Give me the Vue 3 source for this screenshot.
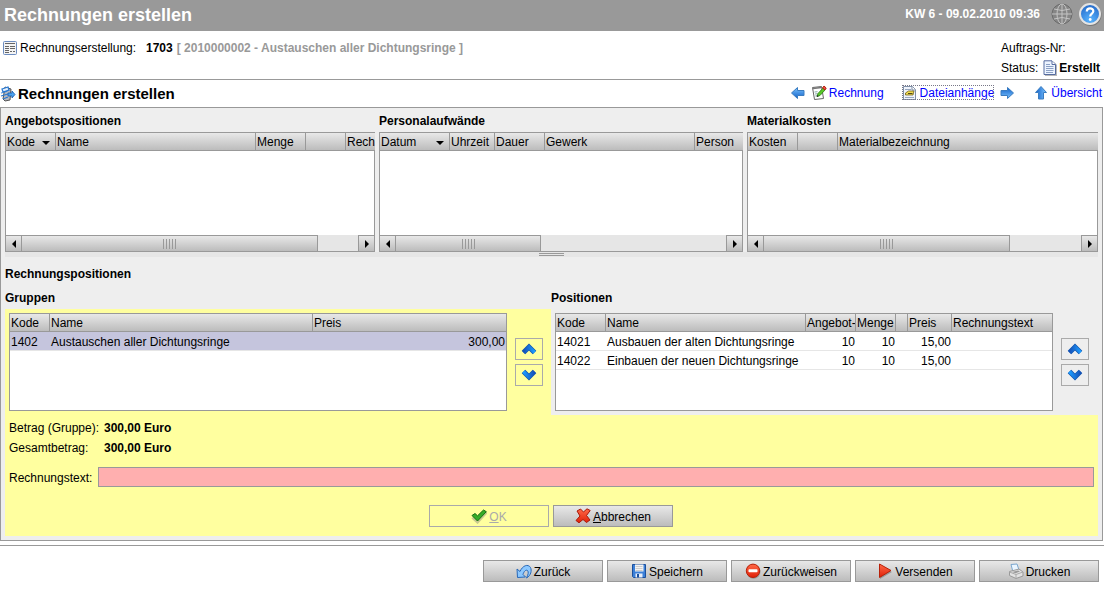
<script setup>
import { ref } from 'vue'

const sources = [
  {
    title: 'Angebotspositionen',
    thumb: 88,
    columns: [
      { label: 'Kode', width: 50, sorted: true },
      { label: 'Name', width: 200 },
      { label: 'Menge', width: 50 },
      { label: '', width: 40 },
      { label: 'Rech' }
    ]
  },
  {
    title: 'Personalaufwände',
    thumb: 44,
    columns: [
      { label: 'Datum', width: 70, sorted: true },
      { label: 'Uhrzeit', width: 45 },
      { label: 'Dauer', width: 50 },
      { label: 'Gewerk', width: 150 },
      { label: 'Person' }
    ]
  },
  {
    title: 'Materialkosten',
    thumb: 77.5,
    columns: [
      { label: 'Kosten', width: 50 },
      { label: '', width: 40 },
      { label: 'Materialbezeichnung' }
    ]
  }
]

const positions = [
  { code: '14021', name: 'Ausbauen der alten Dichtungsringe', offer: 10, amount: 10, price: '15,00' },
  { code: '14022', name: 'Einbauen der neuen Dichtungsringe', offer: 10, amount: 10, price: '15,00' }
]

const actions = [
  { label: 'Zurück', icon: 'i-undo' },
  { label: 'Speichern', icon: 'i-save' },
  { label: 'Zurückweisen', icon: 'i-reject' },
  { label: 'Versenden', icon: 'i-play' },
  { label: 'Drucken', icon: 'i-print' }
]

const invoiceText = ref('')
</script>

<template>
  <div class="page">
    <svg class="sprite" aria-hidden="true">
      <defs>
        <linearGradient id="g-blue" x1="0" y1="0" x2="0" y2="1">
          <stop offset="0" stop-color="#7cc4ff" /><stop offset="1" stop-color="#1060c8" />
        </linearGradient>
        <linearGradient id="g-chev" x1="0" y1="0" x2="1" y2="0">
          <stop offset="0" stop-color="#1450b8" /><stop offset="1" stop-color="#1c9cff" />
        </linearGradient>
        <linearGradient id="g-red" x1="0" y1="0" x2="0" y2="1">
          <stop offset="0" stop-color="#ff6a48" /><stop offset="1" stop-color="#e02008" />
        </linearGradient>
        <radialGradient id="g-help" cx=".5" cy=".8" r=".8">
          <stop offset="0" stop-color="#58b4ff" /><stop offset="1" stop-color="#2468c8" />
        </radialGradient>
      </defs>
      <symbol id="i-globe" viewBox="0 0 24 24">
        <circle cx="12" cy="12" r="10" fill="#858585" stroke="#6c6c6c" />
        <g fill="none" stroke="#c4c4c4">
          <ellipse cx="12" cy="12" rx="5" ry="10" />
          <path d="M12 2v20M2 12h20M4 7q8 3 16 0M4 17q8-3 16 0" />
        </g>
      </symbol>
      <symbol id="i-help" viewBox="0 0 24 24">
        <circle cx="12.500" cy="13" r="11" fill="#777" />
        <circle cx="12" cy="12" r="10" fill="url(#g-help)" stroke="#e4e4e4" stroke-width="2" />
        <path d="M8.800 9.500C8.800 5.200 15.500 5.400 15.300 9.300c0 2.300-3.100 2.500-3.100 5.200" fill="none" stroke="#fff" stroke-width="2.200" />
        <circle cx="12.200" cy="17.500" r="1.400" fill="#fff" />
      </symbol>
      <symbol id="i-form" viewBox="0 0 16 16">
        <rect x="1.500" y="1.500" width="13" height="13" rx="1" fill="#f4f4f4" stroke="#6c8cc0" />
        <path d="M3 3.500h10M3 6.500h4M3 8.500h4M3 10.500h4M3 12.500h4M8 6.500h5M8 8.500h5M8 11.500h2M11 11.500h2" stroke="#666" />
      </symbol>
      <symbol id="i-invoice" viewBox="0 0 16 16">
        <path d="M5 1l6 2-1 11-5 1-2-2z" fill="#b4b8c0" stroke="#555" />
        <path d="M2 3l6-2 1 3-6 2zM1 7l7-2M1 10l7-2M3 13l5-2" fill="#e4f0ff" stroke="#2878d0" stroke-width="1.300" />
        <path d="M8 7h4V5l3 3.500L12 12v-2H8z" fill="#4ca4f0" stroke="#1858a8" stroke-width=".8" />
      </symbol>
      <symbol id="i-doc" viewBox="0 0 16 16">
        <path d="M3 2h9l3 3v11H3z" fill="#888" opacity=".6" />
        <path d="M2 .8h8l3.500 3.500v10.200H2z" fill="#edf4ff" stroke="#566ca0" />
        <path d="M10 1v3.500h3.500" fill="#fff" stroke="#566ca0" />
        <path d="M4 4.500h4M4 6.500h7.500M4 8.500h7.500M4 10.500h7.500M4 12.500h7" stroke="#8ba0c4" />
      </symbol>
      <symbol id="i-edit" viewBox="0 0 16 16">
        <path d="M1.500 2.500l9-1 2 12-9 1z" fill="#fff" stroke="#666" />
        <path d="M2 3.500l8.500-1" stroke="#777" stroke-width="1.500" />
        <path d="M3.500 7l3-.3M4 9l2.500-.3M4.300 11l2-.3" stroke="#8aa" />
        <path d="M6 11.500L7 8.500 12 3l2 2-5 5.500z" fill="#58c828" stroke="#287810" stroke-width=".8" />
        <path d="M11.500 3l1.500-2 2.200 2L14 5z" fill="#f05040" stroke="#b02010" />
        <path d="M5.800 12l.6-2 1.300 1.300z" fill="#222" />
      </symbol>
      <symbol id="i-attach" viewBox="0 0 16 16">
        <path d="M1.500 1.500h9l3 3v10h-12z" fill="#f0f4fc" stroke="#8090a8" />
        <path d="M10 1.500v3.500h3.500" fill="#fff" stroke="#8090a8" />
        <path d="M3 4.500h6M3 12.500h9" stroke="#98a8c0" />
        <path d="M3.500 8l3-2h5.500l-1 4H3.500z" fill="#f0dc50" stroke="#706020" stroke-width=".8" />
        <path d="M6 8.500h4.500" stroke="#504818" />
      </symbol>
      <symbol id="i-arrow" viewBox="0 0 16 16">
        <path d="M1.500 8l6-5.500v3h6.500v5H7.500v3z" fill="url(#g-blue)" stroke="#3a7cc0" stroke-linejoin="round" />
      </symbol>
      <symbol id="i-chevron" viewBox="0 0 16 16">
        <path d="M2.500 11.500L8 6l5.500 5.500" fill="none" stroke="#1458b0" stroke-width="5" />
        <path d="M2.500 11.500L8 6l5.500 5.500" fill="none" stroke="url(#g-chev)" stroke-width="3.500" />
      </symbol>
      <symbol id="i-check" viewBox="0 0 16 16">
        <path d="M1.500 9.500L6.500 14 15.500 4" fill="none" stroke="#777" stroke-width="3" opacity=".4" />
        <path d="M1 7.500l3-2 2.500 2.300L12.500 2l2.800 1.700L6.500 13z" fill="#34ac28" stroke="#187010" stroke-linejoin="round" />
      </symbol>
      <symbol id="i-cross" viewBox="0 0 16 16">
        <path d="M2 3l3.500-2L8.500 4 12 .8l3.200 1.700L11.500 7.500l3.500 4.500-3.500 2.500L8 11.500l-4 3.300-3-2.300L5 8z" fill="url(#g-red)" stroke="#a81808" stroke-linejoin="round" />
      </symbol>
      <symbol id="i-undo" viewBox="0 0 16 16">
        <path d="M1 6l.5 8.500L9.500 14 7 11.500C8 8 10 6.500 11.500 7.500 13 9 12 12 10.500 15 15 12.500 16 7.500 14.500 4.500 12 .5 6.500 2.500 4 8.500z" fill="#8cc8ff" stroke="#2868b8" stroke-linejoin="round" />
      </symbol>
      <symbol id="i-save" viewBox="0 0 16 16">
        <path d="M1.500 1.500h13v13h-12l-1-1z" fill="#3c80d8" stroke="#1c509c" />
        <path d="M4 1.500h8.500v7H4z" fill="#f2f2f2" />
        <path d="M4.500 3.500h7M4.500 5.500h7M4.500 7.500h7" stroke="#ccc" />
        <path d="M4.500 10.500h7v4h-7z" fill="#e8eef8" />
        <path d="M6 11h2v3.500H6z" fill="#1c509c" />
      </symbol>
      <symbol id="i-reject" viewBox="0 0 16 16">
        <circle cx="8.500" cy="8.800" r="7" fill="#777" opacity=".6" />
        <circle cx="8" cy="7.800" r="6.700" fill="url(#g-red)" stroke="#b82008" />
        <rect x="3.500" y="6.300" width="9" height="3" rx=".8" fill="#fff" />
      </symbol>
      <symbol id="i-play" viewBox="0 0 16 16">
        <path d="M3 3l12 6L3 16z" fill="#777" opacity=".6" />
        <path d="M2.500 1l11.500 6.500L2.500 14.500z" fill="url(#g-red)" stroke="#b82008" stroke-linejoin="round" />
      </symbol>
      <symbol id="i-print" viewBox="0 0 16 16">
        <path d="M3 1.500l6-.5 2 6-6 2z" fill="#eaf5ff" stroke="#7ca8d0" />
        <path d="M1.500 8.500L11 6l4 3v4l-7 2.500-6.500-3z" fill="#e2e2e2" stroke="#999" stroke-linejoin="round" />
        <path d="M1.500 9L8 11.500 15 9M8 11.500v3.500" fill="none" stroke="#aaa" />
        <path d="M4 9l6-1.500 2 1-4.500 1.800z" fill="#999" />
      </symbol>
    </svg>

    <header class="topbar">
      <h1>Rechnungen erstellen</h1>
      <span class="clock">KW 6 - 09.02.2010 09:36</span>
      <svg class="icon-lg"><use href="#i-globe" /></svg>
      <button class="bare" type="button" aria-label="Hilfe"><svg class="icon-lg"><use href="#i-help" /></svg></button>
    </header>

    <section class="record">
      <div class="record-name">
        <svg class="icon"><use href="#i-form" /></svg>
        <span class="record-label">Rechnungserstellung:</span>
        <b>1703</b>
        <b class="muted">[ 2010000002 - Austauschen aller Dichtungsringe ]</b>
      </div>
      <div class="record-status">
        <div>Auftrags-Nr:</div>
        <div class="status">Status: <svg class="icon"><use href="#i-doc" /></svg><b>Erstellt</b></div>
      </div>
    </section>

    <div class="titlebar">
      <svg class="icon"><use href="#i-invoice" /></svg>
      <h2>Rechnungen erstellen</h2>
      <nav>
        <div class="step">
          <svg class="icon"><use href="#i-arrow" /></svg>
          <a href="#rechnung"><svg class="icon"><use href="#i-edit" /></svg>Rechnung</a>
        </div>
        <div class="step">
          <a href="#anhaenge" class="focused"><svg class="icon"><use href="#i-attach" /></svg>Dateianhänge</a>
          <svg class="icon flip"><use href="#i-arrow" /></svg>
        </div>
        <a href="#uebersicht"><svg class="icon up"><use href="#i-arrow" /></svg>Übersicht</a>
      </nav>
    </div>

    <main class="panel">
      <div class="sources">
        <section v-for="s in sources" :key="s.title">
          <h3>{{ s.title }}</h3>
          <div class="scrollbox">
            <table :aria-label="s.title">
              <colgroup>
                <col v-for="(c, i) in s.columns" :key="i" :style="c.width ? { width: c.width + 'px' } : null" />
              </colgroup>
              <thead>
                <tr>
                  <th v-for="(c, i) in s.columns" :key="i">
                    <div class="th">{{ c.label }}<i v-if="c.sorted" class="sort"></i></div>
                  </th>
                </tr>
              </thead>
            </table>
            <div class="rows"></div>
            <div class="scrollbar">
              <button type="button" aria-label="Nach links"><i class="tri left"></i></button>
              <div class="track">
                <div class="thumb" :style="{ width: s.thumb + '%' }"><i class="grip"></i></div>
              </div>
              <button type="button" aria-label="Nach rechts"><i class="tri right"></i></button>
            </div>
          </div>
        </section>
      </div>
      <div class="splitter"><i></i></div>

      <h3 class="section-title">Rechnungspositionen</h3>
      <div class="halves">
        <h3>Gruppen</h3>
        <h3>Positionen</h3>
      </div>

      <form class="editor" @submit.prevent>
        <div class="halves">
          <div class="half">
            <div class="listbox">
              <table aria-label="Gruppen">
                <colgroup><col class="w40" /><col class="w-name" /><col /></colgroup>
                <thead><tr><th>Kode</th><th>Name</th><th>Preis</th></tr></thead>
                <tbody>
                  <tr class="selected"><td>1402</td><td>Austauschen aller Dichtungsringe</td><td class="num">300,00</td></tr>
                </tbody>
              </table>
            </div>
            <div class="movers">
              <button type="button" aria-label="Gruppe nach oben"><svg class="icon"><use href="#i-chevron" /></svg></button>
              <button type="button" aria-label="Gruppe nach unten"><svg class="icon down"><use href="#i-chevron" /></svg></button>
            </div>
          </div>
          <div class="half grey">
            <div class="listbox">
              <table aria-label="Positionen">
                <colgroup>
                  <col class="w50" /><col /><col class="w50" /><col class="w40" /><col class="w12" /><col class="w44" /><col class="w100" />
                </colgroup>
                <thead>
                  <tr><th>Kode</th><th>Name</th><th>Angebot-</th><th>Menge</th><th></th><th>Preis</th><th>Rechnungstext</th></tr>
                </thead>
                <tbody>
                  <tr v-for="p in positions" :key="p.code">
                    <td>{{ p.code }}</td><td>{{ p.name }}</td><td class="num">{{ p.offer }}</td>
                    <td class="num">{{ p.amount }}</td><td></td><td class="num">{{ p.price }}</td><td></td>
                  </tr>
                </tbody>
              </table>
            </div>
            <div class="movers">
              <button type="button" aria-label="Position nach oben"><svg class="icon"><use href="#i-chevron" /></svg></button>
              <button type="button" aria-label="Position nach unten"><svg class="icon down"><use href="#i-chevron" /></svg></button>
            </div>
          </div>
        </div>
        <dl>
          <dt>Betrag (Gruppe):</dt><dd>300,00 Euro</dd>
          <dt>Gesamtbetrag:</dt><dd>300,00 Euro</dd>
        </dl>
        <div class="field">
          <label for="rtext">Rechnungstext:</label>
          <input id="rtext" v-model="invoiceText" type="text" />
        </div>
        <div class="confirm">
          <button class="btn" type="submit" disabled><svg class="icon"><use href="#i-check" /></svg><span><u>O</u>K</span></button>
          <button class="btn" type="button"><svg class="icon"><use href="#i-cross" /></svg><span><u>A</u>bbrechen</span></button>
        </div>
      </form>
    </main>

    <footer>
      <button v-for="a in actions" :key="a.label" class="btn" type="button">
        <svg class="icon"><use :href="'#' + a.icon" /></svg><span>{{ a.label }}</span>
      </button>
    </footer>
  </div>
</template>

<style>
body {
  background: #fff;
}
</style>

<style scoped>
.page {
  font: 12px/20px "Liberation Sans", Arial, sans-serif;
  color: #000;
}
.page * {
  box-sizing: border-box;
}
.sprite {
  position: absolute;
  width: 0;
  height: 0;
}
.icon {
  display: block;
  flex: none;
  width: 16px;
  height: 16px;
}
.icon-lg {
  display: block;
  flex: none;
  width: 24px;
  height: 24px;
}
.flip {
  transform: rotate(180deg);
}
.up {
  transform: rotate(90deg);
}
.down {
  transform: rotate(180deg);
}
h1,
h2,
h3,
dl,
dd {
  margin: 0;
}
button,
input {
  font: inherit;
  color: inherit;
  border-radius: 0;
}
button {
  padding: 0;
}
.topbar {
  display: flex;
  align-items: center;
  height: 31px;
  padding: 0 2px 4px 4px;
  background: #999;
  color: #fff;
}
h1 {
  flex: 1;
  padding-top: 2px;
  font-size: 18px;
}
.clock {
  font-weight: bold;
  margin-right: 10px;
}
.bare {
  border: 0;
  background: none;
  margin-left: 4px;
}
.record {
  display: flex;
  justify-content: space-between;
  height: 49px;
  padding: 7px 4px 0 2px;
  border-bottom: 1px solid #999;
}
.record-name {
  display: flex;
  align-items: center;
  height: 20px;
  gap: 4px;
}
.record-label {
  width: 122px;
  margin-left: -2px;
}
.muted {
  color: #999;
}
.status {
  display: flex;
  align-items: center;
}
.status .icon {
  margin: 0 1px 0 4px;
}
.titlebar {
  display: flex;
  align-items: center;
  height: 27px;
}
h2 {
  flex: 1;
  margin-left: 2px;
  font-size: 15px;
}
nav {
  display: flex;
  gap: 18px;
  padding: 0 2px 2px 0;
}
.step {
  display: flex;
  align-items: center;
  gap: 5px;
}
nav a {
  display: flex;
  align-items: center;
  gap: 2px;
  color: #00f;
  line-height: 14px;
  text-decoration: none;
}
.focused {
  height: 15px;
  outline: 1px dotted #778;
  outline-offset: -1px;
}
.panel {
  margin-right: 1px;
  padding: 0 4px 4px;
  border: 1px solid #999;
  background: #eee;
}
h3 {
  padding-top: 2px;
  font-size: 12px;
  line-height: 22px;
}
.sources {
  display: grid;
  grid-template-columns: minmax(0, 370fr) minmax(0, 364fr) minmax(0, 351fr);
  gap: 4px;
}
.scrollbox {
  border: solid #999;
  border-width: 1px 0 1px 1px;
}
table {
  width: 100%;
  table-layout: fixed;
  border-collapse: separate;
  border-spacing: 0;
}
th {
  height: 18px;
  padding: 2px 0 0 1px;
  border: solid #999;
  border-width: 0 1px 1px 0;
  background: linear-gradient(#e8e8e8, #bcbcbc);
  font-weight: normal;
  line-height: 15px;
  text-align: left;
  white-space: nowrap;
  overflow: hidden;
}
th:last-child {
  border-right: 0;
}
.th {
  display: flex;
  align-items: center;
  justify-content: space-between;
  height: 15px;
}
.sort {
  margin-right: 5px;
  border: solid transparent;
  border-width: 4px 4px 0;
  border-top-color: #000;
}
.rows {
  height: 84px;
  border-right: 1px solid #999;
  background: #fff;
}
.scrollbar {
  display: flex;
  height: 16px;
  border-right: 1px solid #999;
  background: #e6e6e6;
}
.scrollbar button {
  display: flex;
  align-items: center;
  justify-content: center;
  width: 16px;
  border: 0 solid #999;
  border-top-width: 1px;
  background: linear-gradient(#e8e8e8, #bcbcbc);
}
.scrollbar button:first-child {
  border-right-width: 1px;
}
.scrollbar button:last-child {
  border-left-width: 1px;
}
.track {
  flex: 1;
}
.thumb {
  display: flex;
  align-items: center;
  justify-content: center;
  height: 16px;
  border: solid #999;
  border-width: 1px 1px 0 0;
  background: linear-gradient(#e8e8e8, #bcbcbc);
}
.grip {
  width: 13px;
  height: 10px;
  background: repeating-linear-gradient(90deg, #999 0 1px, transparent 1px 3px);
}
.tri {
  border: 4px solid transparent;
}
.left {
  border-left-width: 0;
  border-right-color: #000;
}
.right {
  border-right-width: 0;
  border-left-color: #000;
}
.splitter {
  display: flex;
  align-items: center;
  justify-content: center;
  height: 5px;
  background: #e6e6e6;
}
.splitter i {
  width: 25px;
  height: 3px;
  border: solid #999;
  border-width: 1px 0;
}
.section-title {
  margin-top: 4px;
}
.halves {
  display: grid;
  grid-template-columns: minmax(0, 546fr) minmax(0, 547fr);
}
.editor {
  padding-bottom: 9px;
  background: #ffff9f;
}
.half {
  display: flex;
  align-items: center;
  gap: 8px;
  padding: 4px 8px 4px 4px;
}
.grey {
  padding-right: 9px;
  background: #eee;
}
.listbox {
  flex: 1;
  min-width: 0;
  height: 98px;
  border: 1px solid #999;
  background: #fff;
}
td {
  height: 19px;
  padding: 2px 0 0 1px;
  border-bottom: 1px solid #e6e6e6;
  line-height: 16px;
  white-space: nowrap;
}
.num {
  padding: 2px 1px 0 0;
  text-align: right;
}
.selected td {
  background: #c5c5dd;
}
.w12 {
  width: 12px;
}
.w40 {
  width: 40px;
}
.w44 {
  width: 44px;
}
.w50 {
  width: 50px;
}
.w100 {
  width: 100px;
}
.w-name {
  width: 53%;
}
.movers {
  display: grid;
  gap: 4px;
}
.movers button {
  display: flex;
  align-items: center;
  justify-content: center;
  width: 28px;
  height: 22px;
  border: 1px solid #aaa;
  background: none;
}
dl {
  display: grid;
  grid-template-columns: 95px 1fr;
  padding: 3px 4px 0;
}
dd {
  font-weight: bold;
}
.field {
  display: flex;
  align-items: center;
  margin: 9px 4px 0;
}
.field label {
  width: 89px;
  padding-top: 2px;
  line-height: 18px;
}
.field input {
  flex: 1;
  min-width: 0;
  height: 20px;
  padding: 0 2px;
  border: 1px solid #999;
  background: #ffafaf;
  outline: 0;
}
.confirm {
  display: flex;
  justify-content: center;
  gap: 4px;
  margin-top: 18px;
  padding-right: 1px;
}
.btn {
  display: flex;
  align-items: center;
  justify-content: center;
  gap: 2px;
  width: 120px;
  height: 22px;
  border: 1px solid #999;
  background: linear-gradient(#e8e8e8, #bcbcbc);
}
.btn span {
  padding-top: 2px;
  line-height: 18px;
}
.btn:disabled {
  border-color: #aaa;
  background: none;
  color: #aaa;
}
footer {
  display: flex;
  justify-content: flex-end;
  gap: 4px;
  margin-top: 4px;
  padding: 14px 5px 9px;
  border-top: 1px solid #999;
}
</style>
